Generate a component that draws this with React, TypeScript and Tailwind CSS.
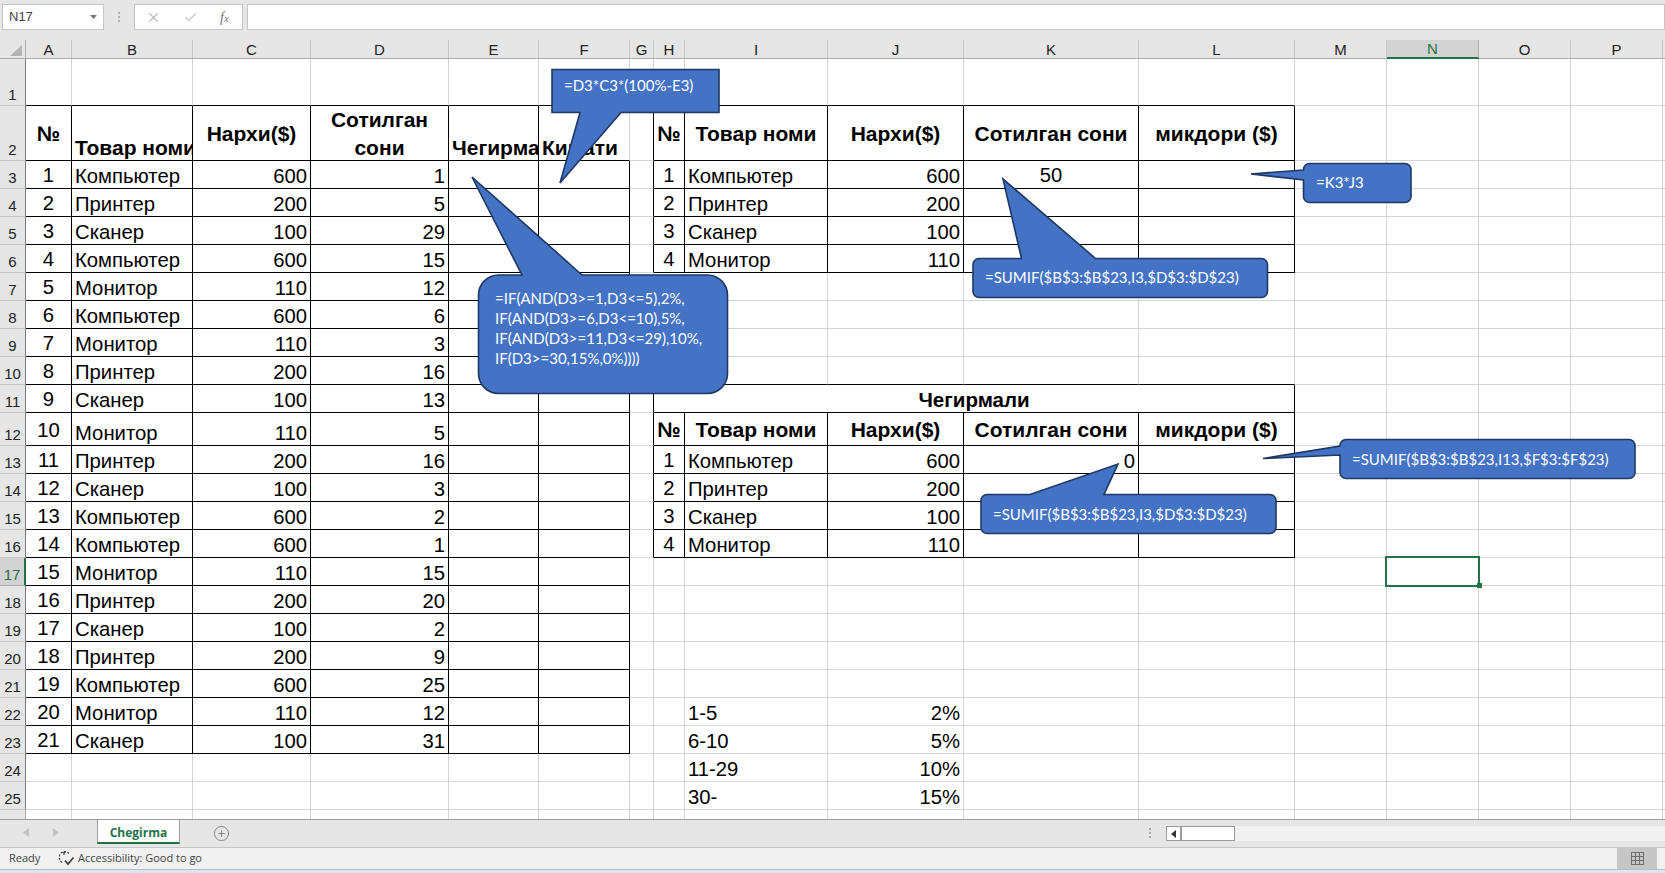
import { Check, CirclePlus, X } from "lucide-react";

const columns = ["A", "B", "C", "D", "E", "F", "G", "H", "I", "J", "K", "L", "M", "N", "O", "P"];

// row number -> height class is on the grid itself, this is just the list of rows
const rowNumbers = Array.from({ length: 25 }, (_, i) => i + 1);

const products: [string, number, number][] = [
  ["Компьютер", 600, 1],
  ["Принтер", 200, 5],
  ["Сканер", 100, 29],
  ["Компьютер", 600, 15],
  ["Монитор", 110, 12],
  ["Компьютер", 600, 6],
  ["Монитор", 110, 3],
  ["Принтер", 200, 16],
  ["Сканер", 100, 13],
  ["Монитор", 110, 5],
  ["Принтер", 200, 16],
  ["Сканер", 100, 3],
  ["Компьютер", 600, 2],
  ["Компьютер", 600, 1],
  ["Монитор", 110, 15],
  ["Принтер", 200, 20],
  ["Сканер", 100, 2],
  ["Принтер", 200, 9],
  ["Компьютер", 600, 25],
  ["Монитор", 110, 12],
  ["Сканер", 100, 31],
];

const summary: [string, number][] = [
  ["Компьютер", 600],
  ["Принтер", 200],
  ["Сканер", 100],
  ["Монитор", 110],
];

const discounts: [string, string][] = [
  ["1-5", "2%"],
  ["6-10", "5%"],
  ["11-29", "10%"],
  ["30-", "15%"],
];

type CellContent = { text: string; kind: "num" | "left" | "right" | "center" | "head" | "headBottom" | "headLeft" };

function cellContent(row: number, col: number): CellContent | null {
  // left table
  if (row === 2) {
    if (col === 0) return { text: "№", kind: "head" };
    if (col === 1) return { text: "Товар номи", kind: "headLeft" };
    if (col === 2) return { text: "Нархи($)", kind: "head" };
    if (col === 3) return { text: "Сотилган сони", kind: "headBottom" };
    if (col === 4) return { text: "Чегирма", kind: "headLeft" };
    if (col === 5) return { text: "Кимати", kind: "headLeft" };
  }
  if (row >= 3 && row <= 23) {
    const item = products[row - 3];
    if (col === 0) return { text: String(row - 2), kind: "num" };
    if (col === 1) return { text: item[0], kind: "left" };
    if (col === 2) return { text: String(item[1]), kind: "right" };
    if (col === 3) return { text: String(item[2]), kind: "right" };
  }

  // right tables
  if (row === 2 || row === 12) {
    if (col === 7) return { text: "№", kind: "head" };
    if (col === 8) return { text: "Товар номи", kind: "head" };
    if (col === 9) return { text: "Нархи($)", kind: "head" };
    if (col === 10) return { text: "Сотилган сони", kind: "head" };
    if (col === 11) return { text: "микдори ($)", kind: "head" };
  }
  const firstRow = row >= 3 && row <= 6 ? 3 : row >= 13 && row <= 16 ? 13 : 0;
  if (firstRow) {
    const item = summary[row - firstRow];
    if (col === 7) return { text: String(row - firstRow + 1), kind: "num" };
    if (col === 8) return { text: item[0], kind: "left" };
    if (col === 9) return { text: String(item[1]), kind: "right" };
  }
  if (row === 3 && col === 10) return { text: "50", kind: "center" };
  if (row === 13 && col === 10) return { text: "0", kind: "right" };

  // discount ranges
  if (row >= 22 && row <= 25) {
    if (col === 8) return { text: discounts[row - 22][0], kind: "left" };
    if (col === 9) return { text: discounts[row - 22][1], kind: "right" };
  }
  return null;
}

function blackRight(row: number, col: number) {
  if (col <= 4) return row >= 2 && row <= 23;
  if (col === 5) return row >= 3 && row <= 23;
  if (col >= 6 && col <= 11) return (row >= 2 && row <= 6) || (row >= 11 && row <= 16);
  return false;
}

function blackBottom(row: number, col: number) {
  if (col <= 5) return row >= 1 && row <= 23;
  if (col >= 7 && col <= 11) return (row >= 1 && row <= 6) || (row >= 10 && row <= 16);
  return false;
}

const kindClass: Record<CellContent["kind"], string> = {
  num: "items-center justify-center pt-[2px] text-[20.3px]",
  left: "items-end justify-start pl-[3px] text-[20.3px]",
  right: "items-end justify-end pr-[3px] text-[20.3px]",
  center: "items-center justify-center pt-[2px] text-[20.3px]",
  head: "items-center justify-center text-[21px] font-bold",
  headBottom: "items-center justify-center pt-[2px] text-center text-[21px] font-bold",
  headLeft: "items-end justify-start pb-[1px] pl-[3px] text-[21px] font-bold",
};

function Cell({ row, col }: { row: number; col: number }) {
  const content = cellContent(row, col);
  const right = blackRight(row, col) ? "border-r-black" : "border-r-[#d4d4d4]";
  const bottom = blackBottom(row, col) ? "border-b-black" : "border-b-[#d4d4d4]";
  const wrap = content?.kind === "headBottom" ? "whitespace-normal leading-[28px]" : "whitespace-nowrap leading-[23px]";
  return (
    <div
      className={`flex overflow-hidden border-r border-b bg-white text-black ${right} ${bottom} ${wrap} ${
        content ? kindClass[content.kind] : ""
      }`}
    >
      {content?.text}
    </div>
  );
}

function Sheet() {
  return (
    <div className="grid h-[779px] grid-cols-[26px_46px_121px_118px_138px_90px_91px_24px_31px_143px_136px_175px_156px_92px_92px_92px_92px_1fr] grid-rows-[19px_47px_55px_repeat(9,28px)_33px_repeat(13,28px)_9px] font-['Liberation_Sans',sans-serif]">
      {/* Column headers */}
      <div className="flex items-end justify-end border-r border-b border-[#ababab] bg-[#e6e6e6] pr-[3px] pb-[2px]">
        <svg width="12" height="11" viewBox="0 0 12 11">
          <polygon points="12,0 12,11 0,11" fill="#b4b4b4" />
        </svg>
      </div>
      {columns.map((c) => (
        <div
          key={c}
          className={
            c === "N"
              ? "flex items-center justify-center border-r border-b-2 border-r-[#ababab] border-b-[#217346] bg-[#d2d2d2] pt-[2px] text-[15px] text-[#217346]"
              : "flex items-center justify-center border-r border-b border-r-[#c6c6c6] border-b-[#ababab] bg-[#e6e6e6] pt-[2px] text-[15px] text-[#222]"
          }
        >
          {c}
        </div>
      ))}
      <div className="border-b border-[#ababab] bg-[#e6e6e6]" />

      {rowNumbers.map((row) => (
        <RowCells key={row} row={row} />
      ))}

      {/* Cut off row 26 */}
      <div className="border-r border-[#ababab] bg-[#e6e6e6]" />
      {columns.map((c) => (
        <div key={c} className="border-r border-[#d4d4d4] bg-white" />
      ))}
      <div className="bg-white" />
    </div>
  );
}

function RowCells({ row }: { row: number }) {
  return (
    <>
      <div
        className={
          row === 17
            ? "flex items-end justify-center border-r-2 border-b border-r-[#217346] border-b-[#ababab] bg-[#d2d2d2] text-[15px] leading-[20px] text-[#217346]"
            : "flex items-end justify-center border-r border-b border-r-[#7a7a7a] border-b-[#c6c6c6] bg-[#e6e6e6] text-[15px] leading-[20px] text-[#222]"
        }
      >
        {row}
      </div>
      {columns.map((_, col) => {
        if (row === 11 && col === 7) {
          return (
            <div
              key={col}
              className="col-span-5 flex items-center justify-center border-r border-b border-black bg-white pt-[4px] text-[20.5px] font-bold text-black"
            >
              Чегирмали
            </div>
          );
        }
        if (row === 11 && col > 7 && col <= 11) return null;
        return <Cell key={col} row={row} col={col} />;
      })}
      <div className="border-b border-[#d4d4d4] bg-white" />
    </>
  );
}

const calloutPaths = [
  "M552 69.5H719V112.5H621L560 183L580 112.5H552Z",
  "M498.5 275H522L472 177L582 275H707.5A20 20 0 0 1 727.5 295V373.5A20 20 0 0 1 707.5 393.5H498.5A20 20 0 0 1 478.5 373.5V295A20 20 0 0 1 498.5 275Z",
  "M1309.5 163.5H1405A6 6 0 0 1 1411 169.5V196.5A6 6 0 0 1 1405 202.5H1309.5A6 6 0 0 1 1303.5 196.5V180L1251 174L1303.5 170V169.5A6 6 0 0 1 1309.5 163.5Z",
  "M979 258.5H1021.5L1003 179L1095.5 258.5H1261.5A6 6 0 0 1 1267.5 264.5V291.5A6 6 0 0 1 1261.5 297.5H979A6 6 0 0 1 973 291.5V264.5A6 6 0 0 1 979 258.5Z",
  "M1346 439.5H1629A6 6 0 0 1 1635 445.5V472.5A6 6 0 0 1 1629 478.5H1346A6 6 0 0 1 1340 472.5V455L1263 458.5L1340 446V445.5A6 6 0 0 1 1346 439.5Z",
  "M987 494.5H1030L1118 464L1104 494.5H1270A6 6 0 0 1 1276 500.5V527.5A6 6 0 0 1 1270 533.5H987A6 6 0 0 1 981 527.5V500.5A6 6 0 0 1 987 494.5Z",
];

const calloutText = "absolute whitespace-nowrap font-['Lato',sans-serif] text-[15px] leading-[20px] text-white";

function Callouts() {
  return (
    <>
      <svg className="absolute top-0 left-0" width="1665" height="873" viewBox="0 0 1665 873">
        {calloutPaths.map((d) => (
          <path key={d} d={d} fill="#4472c4" stroke="#1f3864" strokeWidth="1.6" strokeLinejoin="miter" />
        ))}
      </svg>
      <div className={`${calloutText} top-[75px] left-[564px]`}>=D3*C3*(100%-E3)</div>
      <div className={`${calloutText} top-[288px] left-[495px]`}>
        =IF(AND(D3&gt;=1,D3&lt;=5),2%,
        <br />
        IF(AND(D3&gt;=6,D3&lt;=10),5%,
        <br />
        IF(AND(D3&gt;=11,D3&lt;=29),10%,
        <br />
        IF(D3&gt;=30,15%,0%))))
      </div>
      <div className={`${calloutText} top-[172px] left-[1316px]`}>=K3*J3</div>
      <div className={`${calloutText} top-[267px] left-[985px]`}>=SUMIF($B$3:$B$23,I3,$D$3:$D$23)</div>
      <div className={`${calloutText} top-[449px] left-[1352px]`}>=SUMIF($B$3:$B$23,I13,$F$3:$F$23)</div>
      <div className={`${calloutText} top-[504px] left-[993px]`}>=SUMIF($B$3:$B$23,I3,$D$3:$D$23)</div>
    </>
  );
}

function FormulaBar() {
  return (
    <div className="flex h-[40px] items-start gap-[4px] bg-[#e6e6e6] pt-[4px] pl-[2px] font-['Liberation_Sans',sans-serif]">
      <div className="flex h-[26px] w-[102px] items-center justify-between border border-[#c6c6c6] bg-white pr-[6px] pl-[6px] text-[13px] text-[#444]">
        N17
        <svg width="7" height="4" viewBox="0 0 7 4">
          <polygon points="0,0 7,0 3.5,4" fill="#777" />
        </svg>
      </div>
      <div className="flex h-[26px] w-[22px] flex-col items-center justify-center gap-[2px]">
        <span className="h-[2px] w-[2px] bg-[#b0b0b0]" />
        <span className="h-[2px] w-[2px] bg-[#b0b0b0]" />
        <span className="h-[2px] w-[2px] bg-[#b0b0b0]" />
      </div>
      <div className="flex h-[26px] w-[109px] items-center gap-[22px] border border-[#c6c6c6] bg-white pl-[11px] text-[#bdbdbd]">
        <X size={15} strokeWidth={2} />
        <Check size={15} strokeWidth={2} className="text-[#c4c4c4]" />
        <span className="font-['Liberation_Serif',serif] text-[14px] text-[#777] italic">
          f<span className="text-[11px]">x</span>
        </span>
      </div>
      <div className="h-[26px] flex-1 border border-[#c6c6c6] bg-white" />
    </div>
  );
}

function SheetTabs() {
  return (
    <div className="flex h-[28px] items-start border-t border-[#9c9c9c] bg-[#e6e6e6] font-['Open_Sans',sans-serif]">
      <div className="flex h-[24px] w-[97px] items-center gap-[23px] pl-[23px]">
        <svg width="6" height="9" viewBox="0 0 6 9">
          <polygon points="6,0 6,9 0,4.5" fill="#c2c2c2" />
        </svg>
        <svg width="6" height="9" viewBox="0 0 6 9" className="ml-[1px]">
          <polygon points="0,0 0,9 6,4.5" fill="#c2c2c2" />
        </svg>
      </div>
      <div className="flex h-[24px] w-[83px] items-center justify-center border-x border-b-2 border-x-[#9c9c9c] border-b-[#217346] bg-white pt-[3px] text-[12px] font-bold text-[#217346]">
        Chegirma
      </div>
      <div className="flex h-[26px] w-[82px] items-center justify-center pl-[1px]">
        <CirclePlus size={17} strokeWidth={1.2} className="text-[#777]" />
      </div>
      <div className="flex-1" />
      <div className="flex h-[26px] w-[32px] flex-col items-center justify-center gap-[2px]">
        <span className="h-[2px] w-[2px] bg-[#aaa]" />
        <span className="h-[2px] w-[2px] bg-[#aaa]" />
        <span className="h-[2px] w-[2px] bg-[#aaa]" />
      </div>
      <div className="mt-[6px] flex h-[15px] w-[499px] bg-[#f1f1f1]">
        <div className="flex w-[15px] items-center justify-center border border-[#9c9c9c] bg-white">
          <svg width="5" height="8" viewBox="0 0 5 8">
            <polygon points="5,0 5,8 0,4" fill="#333" />
          </svg>
        </div>
        <div className="w-[54px] border border-[#9c9c9c] bg-white" />
      </div>
    </div>
  );
}

function StatusBar() {
  return (
    <div className="flex h-[26px] flex-col">
      <div className="flex h-[22px] items-center border-t border-[#c6c6c6] bg-[#f1f1f1] pl-[9px] font-['Open_Sans',sans-serif] text-[11px] text-[#444]">
        <span className="w-[49px]">Ready</span>
        <svg width="17" height="15" viewBox="0 0 17 15" fill="none" stroke="#444" strokeWidth="1.2">
          <path d="M11 2.5A5.5 5.5 0 0 0 1.5 7.5A5.5 5.5 0 0 0 5 12" strokeDasharray="2 1.5" />
          <path d="M6 1V4M4.5 1.5H7.5" />
          <path d="M7 9.5L10 13L15.5 6.5" strokeWidth="1.8" />
        </svg>
        <span className="ml-[3px]">Accessibility: Good to go</span>
        <div className="flex-1" />
        <div className="mr-[8px] flex h-[21px] w-[40px] items-center justify-center bg-[#c6c6c6]">
          <svg width="13" height="13" viewBox="0 0 13 13" fill="none" stroke="#6e6e6e" strokeWidth="1">
            <rect x="0.5" y="0.5" width="12" height="12" />
            <path d="M4.5 0.5V12.5M8.5 0.5V12.5M0.5 4.5H12.5M0.5 8.5H12.5" />
          </svg>
        </div>
      </div>
      <div className="flex-1 border-t border-[#b8bec8] bg-[#dce6f2]" />
    </div>
  );
}

export default function App() {
  return (
    <div className="relative flex h-[873px] w-[1665px] flex-col overflow-hidden bg-white">
      <FormulaBar />
      <Sheet />
      <SheetTabs />
      <StatusBar />
      <Callouts />
      {/* N17 selection */}
      <div className="absolute top-[556px] left-[1385px] h-[31px] w-[95px] border-2 border-[#217346]" />
      <div className="absolute top-[583px] left-[1477px] h-[5px] w-[5px] bg-[#217346]" />
    </div>
  );
}
